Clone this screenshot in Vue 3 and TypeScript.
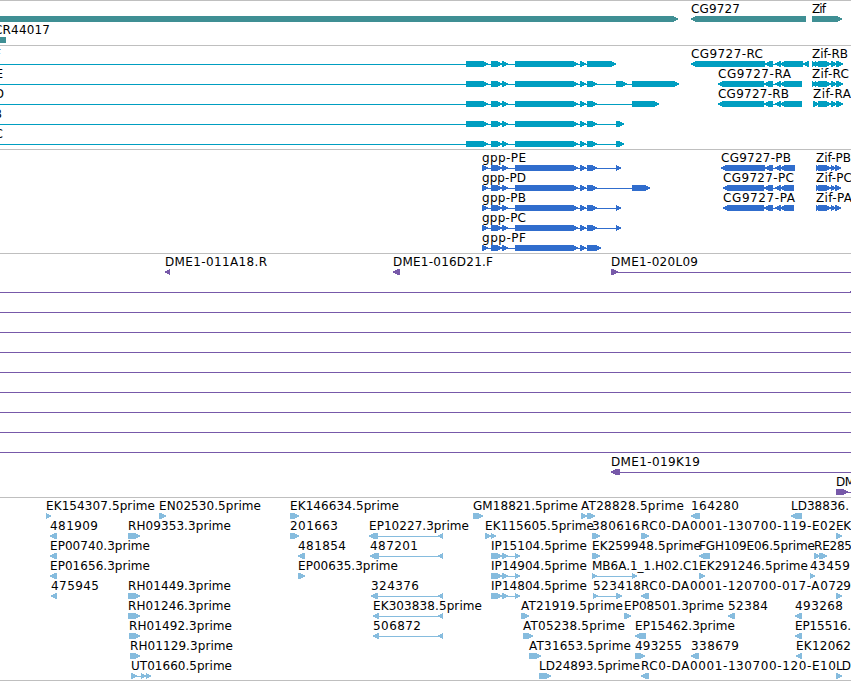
<template>
    <div class="browser">
        <section v-for="track in tracks" :key="track.name" class="track" :class="track.name">
            <svg
                v-for="(row, i) in track.rows"
                :key="i"
                class="row"
                width="851"
                height="20"
                viewBox="0 0 851 20"
            >
                <g v-for="(f, j) in row" :key="j">
                    <rect
                        v-if="f.line"
                        :x="f.line[0]"
                        y="18"
                        :width="f.line[1] - f.line[0]"
                        height="1"
                    />
                    <polygon v-for="(b, k) in f.blocks" :key="k" :points="shape(b, f.dir)" />
                    <text
                        v-if="f.label"
                        :x="f.x"
                        y="12"
                        :textLength="f.w"
                        lengthAdjust="spacing"
                    >{{ f.label }}</text>
                </g>
            </svg>
        </section>
    </div>
</template>

<script setup lang="ts">
type Block = [number, number]
type Dir = 'L' | 'R' | ''

interface Feature {
    label: string
    x: number
    w: number
    dir: Dir
    blocks: Block[]
    line?: Block
}

const feat = (label: string, x: number, w: number, dir: Dir, blocks: Block[], line?: Block): Feature => ({
    label, x, w, dir, blocks, line,
})

// single block or several blocks joined by an intron line
const est = (label: string, x: number, w: number, dir: Dir, ...blocks: Block[]): Feature =>
    feat(label, x, w, dir, blocks, blocks.length > 1 ? [blocks[0][0], blocks[blocks.length - 1][1]] : undefined)

// block with an arrow head on its leading end
const shape = ([a, b]: Block, dir: Dir) => {
    const head = Math.min(6, b - a)
    if (dir === 'R') return `${a},15 ${b - head + 0.5},15 ${b},17.4 ${b},18.4 ${b - head + 0.5},21 ${a},21`
    if (dir === 'L') return `${b},15 ${a + head - 0.5},15 ${a},17.4 ${a},18.4 ${a + head - 0.5},21 ${b},21`
    return `${a},15 ${b},15 ${b},21 ${a},21`
}

const gppExons: Block[] = [[491, 502], [502, 508], [515, 578], [580, 586]]

const gppRna = (label: string, end: number, last: Block[]) =>
    feat(label, end - 43, 43, 'R', [[466, 488], ...gppExons, ...last], [0, last[last.length - 1][1]])

const gppProtein = (label: string, last: Block[]) =>
    feat(label, 482, 44, 'R', [[482, 488], ...gppExons, ...last], [482, last[last.length - 1][1]])

const clone = (): Feature => feat('', 0, 0, '', [], [0, 851])

const genes: Feature[][] = [
    [
        feat('', 0, 0, 'R', [[-10, 678]]),
        feat('CG9727', 691, 49, 'L', [[691, 806]]),
        feat('Zif', 812, 14, 'R', [[812, 842]]),
    ],
    [feat('CR44017', -6, 56, '', [[-10, 6]])],
]

const transcripts: Feature[][] = [
    [
        gppRna('gpp-RF', 1, [[587, 616]]),
        est('CG9727-RC', 691, 72, 'L', [691, 765], [765, 773], [775, 781], [780, 803], [803, 809]),
        est('Zif-RB', 812, 36, 'R', [812, 816], [815, 819], [818, 831], [831, 837], [836, 843]),
    ],
    [
        gppRna('gpp-RE', 3, [[587, 597], [616, 627], [632, 679]]),
        est('CG9727-RA', 718, 73, 'L', [718, 764], [764, 773], [775, 781], [780, 802]),
        est('Zif-RC', 812, 37, 'R', [812, 816], [815, 819], [818, 831], [831, 837], [836, 843]),
    ],
    [
        gppRna('gpp-RD', 4, [[587, 597], [632, 659]]),
        est('CG9727-RB', 718, 71, 'L', [718, 764], [764, 773], [775, 781], [780, 802]),
        est('Zif-RA', 813, 38, 'R', [813, 819], [818, 831], [831, 837], [836, 843]),
    ],
    [gppRna('gpp-RB', 2, [[587, 597], [616, 624]])],
    [gppRna('gpp-RC', 3, [[587, 597], [616, 624]])],
]

const proteins: Feature[][] = [
    [
        gppProtein('gpp-PE', [[587, 597], [616, 621]]),
        est('CG9727-PB', 721, 70, 'L', [721, 765], [765, 773], [775, 781], [780, 795]),
        est('Zif-PB', 816, 35, 'R', [816, 820], [818, 831], [831, 836], [835, 841]),
    ],
    [
        gppProtein('gpp-PD', [[587, 597], [632, 650]]),
        est('CG9727-PC', 723, 71, 'L', [723, 764], [764, 773], [775, 781], [780, 794]),
        est('Zif-PC', 816, 36, 'R', [816, 820], [818, 831], [831, 836], [835, 841]),
    ],
    [
        gppProtein('gpp-PB', [[587, 597], [616, 621]]),
        est('CG9727-PA', 723, 72, 'L', [723, 764], [764, 773], [775, 781], [780, 794]),
        est('Zif-PA', 816, 36, 'R', [816, 820], [818, 831], [831, 836], [835, 841]),
    ],
    [gppProtein('gpp-PC', [[587, 597], [616, 621]])],
    [gppProtein('gpp-PF', [[587, 601]])],
]

const clones: Feature[][] = [
    [
        feat('DME1-011A18.R', 165, 102, 'L', [[165, 170]]),
        feat('DME1-016D21.F', 393, 100, 'L', [[393, 400]]),
        feat('DME1-020L09', 611, 87, 'R', [[611, 618]], [611, 851]),
    ],
    [clone(), feat('', 0, 0, 'L', [[850, 856]])],
    ...Array.from({ length: 8 }, () => [clone()]),
    [feat('DME1-019K19', 611, 89, 'L', [[611, 620]], [611, 851])],
    [feat('DME1', 836, 33, 'R', [[836, 848]], [836, 851])],
]

const ests: Feature[][] = [
    [
        est('EK154307.5prime', 46, 109, 'R', [46, 51]),
        est('EN02530.5prime', 159, 102, 'R', [159, 166]),
        est('EK146634.5prime', 290, 109, 'R', [290, 299]),
        est('GM18821.5prime', 473, 105, 'R', [473, 483]),
        est('AT28828.5prime', 581, 103, 'R', [581, 587], [587, 595]),
        est('164280', 691, 48, 'L', [691, 700]),
        est('LD38836.', 791, 58, 'L', [791, 802]),
    ],
    [
        est('481909', 50, 48, 'L', [50, 57]),
        est('RH09353.3prime', 128, 103, 'R', [128, 140]),
        est('201663', 290, 48, 'R', [290, 299]),
        est('EP10227.3prime', 369, 100, 'L', [369, 378], [438, 443]),
        est('EK115605.5prime', 485, 109, 'R', [485, 491], [491, 496]),
        est('380616', 592, 48, 'R', [592, 600]),
        est('RC0-DA0001-130700-119-E02', 641, 195, 'R', [641, 649]),
        est('EK', 836, 15, 'R', [836, 842]),
    ],
    [
        est('EP00740.3prime', 50, 100, 'L', [50, 57]),
        est('481854', 298, 48, 'L', [298, 305]),
        est('487201', 370, 48, 'L', [370, 379], [438, 443]),
        est('IP15104.5prime', 491, 96, 'R', [491, 502], [502, 508], [515, 520]),
        est('EK259948.5prime', 592, 109, 'R', [592, 600]),
        est('FGH109E06.5prime', 699, 116, 'L', [699, 710]),
        est('RE285', 814, 38, 'R', [814, 820], [819, 827]),
    ],
    [
        est('EP01656.3prime', 50, 100, 'L', [50, 57]),
        est('EP00635.3prime', 298, 100, 'R', [298, 305]),
        est('IP14904.5prime', 491, 96, 'R', [491, 502], [502, 508], [515, 520]),
        est('MB6A.1_1.H02.C1', 592, 107, 'R', [592, 597], [632, 637]),
        est('EK291246.5prime', 699, 109, 'R', [699, 705]),
        est('43459', 810, 40, 'R', [810, 815]),
    ],
    [
        est('475945', 51, 48, 'L', [51, 57]),
        est('RH01449.3prime', 128, 103, 'R', [128, 140]),
        est('324376', 371, 48, 'L', [371, 378], [438, 443]),
        est('IP14804.5prime', 491, 96, 'R', [491, 502], [502, 508], [515, 520]),
        est('523418', 593, 48, 'R', [593, 598], [616, 622]),
        est('RC0-DA0001-120700-017-A07', 641, 195, 'L', [641, 649]),
        est('29', 836, 15, 'R', [836, 842]),
    ],
    [
        est('RH01246.3prime', 128, 103, 'R', [128, 140]),
        est('EK303838.5prime', 373, 109, 'L', [373, 379], [438, 443]),
        est('AT21919.5prime', 521, 102, 'R', [521, 529]),
        est('EP08501.3prime', 624, 100, 'R', [624, 631]),
        est('52384', 728, 40, 'L', [728, 735]),
        est('493268', 795, 48, 'L', [795, 802]),
    ],
    [
        est('RH01492.3prime', 129, 103, 'R', [129, 140]),
        est('506872', 373, 48, 'L', [373, 379], [438, 443]),
        est('AT05238.5prime', 523, 102, 'R', [523, 533]),
        est('EP15462.3prime', 635, 100, 'L', [635, 646]),
        est('EP15516.', 795, 56, 'L', [795, 802]),
    ],
    [
        est('RH01129.3prime', 130, 103, 'R', [130, 140]),
        est('AT31653.5prime', 529, 102, 'R', [529, 541]),
        est('493255', 635, 47, 'R', [635, 645]),
        est('338679', 691, 48, 'L', [691, 699]),
        est('EK12062', 796, 55, 'L', [796, 802]),
    ],
    [
        est('UT01660.5prime', 131, 101, 'R', [131, 137], [141, 146], [146, 151]),
        est('LD24893.5prime', 539, 101, 'R', [539, 551]),
        est('RC0-DA0001-130700-120-E10', 641, 195, 'L', [641, 649]),
        est('LD', 836, 15, 'R', [836, 842]),
    ],
]

const tracks = [
    { name: 'genes', rows: genes },
    { name: 'transcripts', rows: transcripts },
    { name: 'proteins', rows: proteins },
    { name: 'clones', rows: clones },
    { name: 'ests', rows: ests },
]
</script>

<style>
body {
    margin: 0;
    background: #fff;
}
</style>

<style scoped>
.browser {
    width: 851px;
    height: 681px;
    overflow: hidden;
    box-sizing: border-box;
    border-bottom: 1px solid #bfbfbf;
    background: #fff;
}

.track {
    display: flex;
    flex-direction: column;
    border-top: 1px solid #bfbfbf;
    padding-bottom: 3px;
}

.row {
    display: block;
    flex: none;
    overflow: visible;
}

.row rect,
.row polygon {
    shape-rendering: crispEdges;
}

.row text {
    font-family: "DejaVu Sans", sans-serif;
    font-size: 12px;
    fill: #000;
}

.genes {
    fill: #3f8f94;
    gap: 1px;
}

.transcripts {
    fill: #009ec1;
}

.proteins {
    fill: #306dcd;
}

.clones {
    fill: #7759a9;
}

.ests {
    fill: #86bcde;
    padding-bottom: 2px;
}
</style>
